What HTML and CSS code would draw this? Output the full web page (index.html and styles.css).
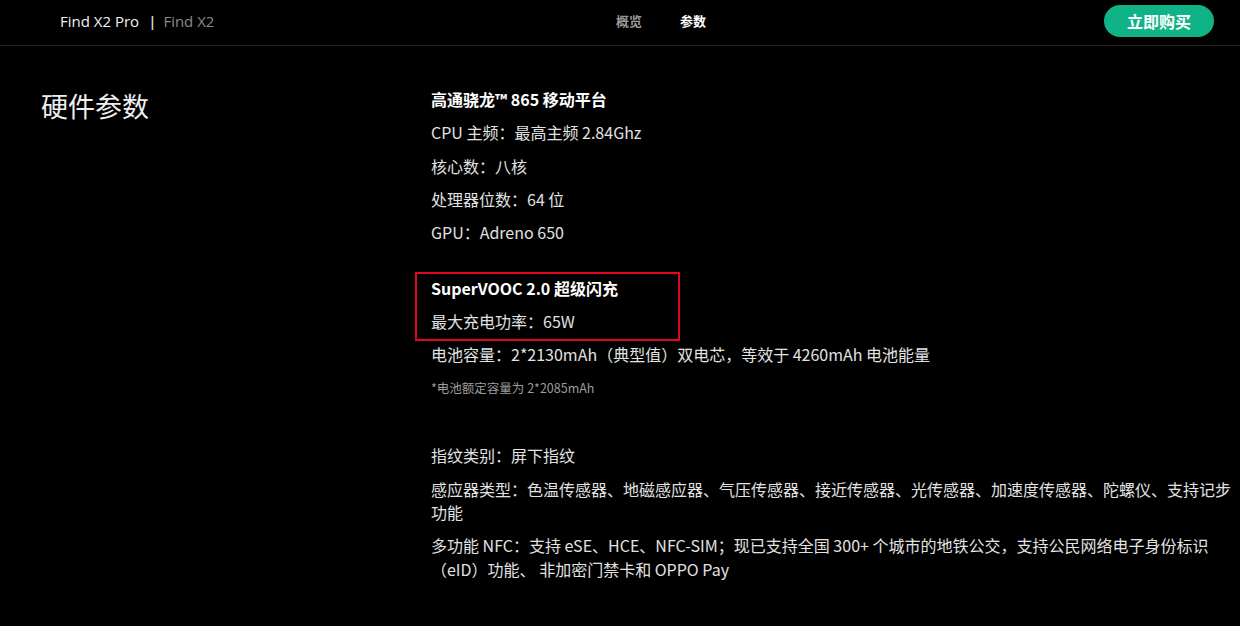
FILE: index.html
```html
<!DOCTYPE html>
<html lang="zh-CN">
<head>
<meta charset="utf-8">
<title>Find X2 Pro 参数</title>
<link rel="stylesheet" href="styles.css">
</head>
<body>
<header class="topbar">
  <div class="brand">
    <span class="brand-current">Find X2 Pro</span>
    <span class="brand-sep">|</span>
    <span class="brand-other">Find X2</span>
  </div>
  <nav class="nav">
    <a class="nav-link">概览</a>
    <a class="nav-link nav-active">参数</a>
  </nav>
  <div class="spacer"></div>
  <a class="buy">立即购买</a>
</header>
<main class="spec">
  <h1 class="spec-title">硬件参数</h1>
  <div class="spec-body">
    <section class="group group-cpu">
      <p class="line strong">高通骁龙™ 865 移动平台</p>
      <p class="line">CPU 主频：最高主频 2.84Ghz</p>
      <p class="line">核心数：八核</p>
      <p class="line">处理器位数：64 位</p>
      <p class="line">GPU：Adreno 650</p>
    </section>
    <section class="group group-battery">
      <div class="highlight">
        <span class="ring"></span>
        <p class="line strong">SuperVOOC 2.0 超级闪充</p>
        <p class="line">最大充电功率：65W</p>
      </div>
      <p class="line">电池容量：2*2130mAh（典型值）双电芯，等效于 4260mAh 电池能量</p>
      <p class="note">*电池额定容量为 2*2085mAh</p>
    </section>
    <section class="group group-misc">
      <p class="line">指纹类别：屏下指纹</p>
      <p class="line">感应器类型：色温传感器、地磁感应器、气压传感器、接近传感器、光传感器、加速度传感器、陀螺仪、支持记步功能</p>
      <p class="line">多功能 NFC：支持 eSE、HCE、NFC-SIM；现已支持全国 300+ 个城市的地铁公交，支持公民网络电子身份标识（eID）功能、 非加密门禁卡和 OPPO Pay</p>
    </section>
  </div>
</main>
</body>
</html>
```
FILE: styles.css
```css
* { box-sizing: border-box; }
html, body { margin: 0; padding: 0; }
body {
  background: #000;
  color: #e6e6e6;
  font-family: "Noto Sans CJK SC", "Noto Sans", sans-serif;
  width: 1240px;
  min-height: 626px;
  overflow: hidden;
}

.topbar {
  height: 46px;
  padding: 0 26px 4px 60px;
  display: flex;
  align-items: center;
  border-bottom: 1px solid #262626;
}
.brand {
  width: 556px;
  display: flex;
  align-items: center;
  font-family: "Open Sans", "Noto Sans CJK SC", sans-serif;
  font-size: 15px;
  white-space: nowrap;
}
.brand-current { color: #f2f2f2; }
.brand-sep { color: #e0e0e0; margin: 0 7px 0 9px; font-weight: 600; }
.brand-other { color: #8a8a8a; }

.nav { display: flex; gap: 38px; }
.nav-link {
  font-size: 13px;
  font-weight: 700;
  color: #9a9a9a;
}
.nav-active { color: #ffffff; }
.spacer { flex: 1; }
.buy {
  display: flex;
  align-items: center;
  justify-content: center;
  width: 110px;
  height: 32px;
  border-radius: 16px;
  background: #10b386;
  color: #fff;
  font-size: 16px;
  font-weight: 700;
}

.spec {
  display: grid;
  grid-template-columns: 390px 800px;
  padding: 42px 0 0 41px;
}
.spec-title {
  margin: 0;
  font-size: 27px;
  font-weight: 400;
  line-height: 36px;
  color: #efefef;
}

.group { margin: 0 0 32px; }
.group-battery { margin-bottom: 47px; }
.line {
  margin: 0 0 9.8px;
  font-size: 16px;
  line-height: 23.5px;
  color: #e2e2e2;
}
.group > .line:last-child { margin-bottom: 0; }
.strong { font-weight: 700; color: #fff; }
.highlight { position: relative; }
.ring {
  position: absolute;
  left: -16px;
  top: -5px;
  width: 265px;
  height: 69px;
  border: 2px solid #e3061c;
}
.note {
  margin: 12.6px 0 0;
  font-size: 12.5px;
  line-height: 18px;
  color: #9c9c9c;
}
```
